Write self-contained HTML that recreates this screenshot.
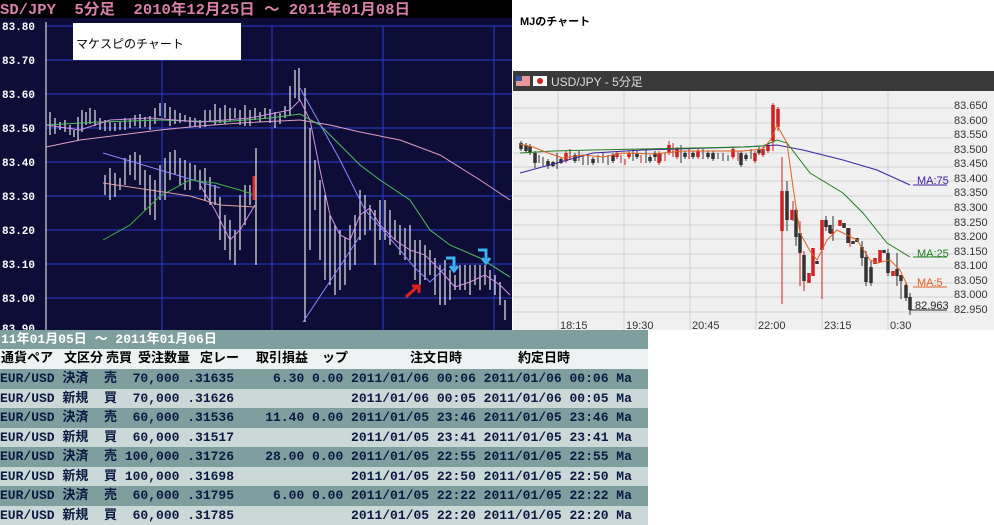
<!DOCTYPE html>
<html><head><meta charset="utf-8"><style>
body{margin:0;width:994px;height:525px;overflow:hidden;background:#fff;position:relative;font-family:"Liberation Sans","Noto Sans CJK JP",sans-serif}
.a{position:absolute}
#tbl{position:absolute;left:0;top:330px;width:648px;height:195px;background:#7f9e9e;overflow:hidden;font-family:"Liberation Mono","Noto Sans CJK JP",monospace;font-weight:bold;font-size:13px;color:#0a1a40}
.r{position:absolute;left:0;width:648px;height:19.5px;line-height:19.5px;white-space:pre}
.r span{position:absolute;top:0}
</style></head><body>
<svg class="a" style="left:0;top:0" width="512" height="330">
<rect width="512" height="330" fill="#0d0d38"/>
<rect width="512" height="18" fill="#000"/>
<text x="0" y="14" fill="#d880a8" font-size="15" font-family="Liberation Mono,Noto Sans CJK JP,monospace" font-weight="bold" style="white-space:pre" textLength="410" lengthAdjust="spacingAndGlyphs">SD/JPY  5分足  2010年12月25日 ～ 2011年01月08日</text>
<g stroke="#2a3cd0" stroke-width="1">
<path d="M46 26V330M162 26V330M272 26V330M383 26V330M494 26V330"/>
<path d="M46 26H512M46 60H512M46 94H512M46 128H512M46 162H512M46 196H512M46 230H512M46 264H512M46 298H512"/>
</g>
<path d="M46 22V330" stroke="#fff"/>
<g fill="#fff" font-size="11" font-family="Liberation Mono,monospace" font-weight="bold">
<text x="2" y="30">83.80</text><text x="2" y="64">83.70</text><text x="2" y="98">83.60</text><text x="2" y="132">83.50</text><text x="2" y="166">83.40</text><text x="2" y="200">83.30</text><text x="2" y="234">83.20</text><text x="2" y="268">83.10</text><text x="2" y="302">83.00</text><text x="2" y="332">83.90</text>
</g>
<rect x="73" y="23" width="168" height="37" fill="#fff"/>
<text x="76" y="48" font-size="12" fill="#000">マケスピのチャート</text>
<g stroke="#e8e8e8" stroke-width="1.2">
<path d="M50 112V135M55 118V134M60 122V130M65 120V132M70 125V135M74 130V137M78 117V140M82 110V132M86 112V125M90 108V124M95 110V126M100 118V130M105 120V131M110 122V131M115 123V131M120 122V130M125 118V130M130 119V128M135 115V126M140 114V128M145 117V127M150 116V130M155 108V124M160 103V116M165 103V118M170 107V126M175 110V124M180 113V123M185 115V122M190 117V127M195 118V126M200 120V128M205 110V127M210 110V122M215 104V125M220 108V123M225 105V124M230 108V121M235 108V118M240 110V125M245 105V126M250 110V126M255 108V120M260 112V122M265 108V118M270 109V123M275 112V128M280 113V124M285 106V118M290 86V116M295 70V98M299 68V100"/>
<path d="M305 88V322M310 128V250M315 160V210M320 180V260M325 195V280M330 215V285M335 225V295M340 230V290M345 237V285M350 225V270M355 215V265M360 190V240M365 195V235M370 205V230M375 210V265M380 200V240M385 200V240M390 210V245M395 220V240M400 225V255M405 228V260M410 225V260M415 240V280M420 240V285M425 245V280M430 250V275M435 258V295M440 265V305M445 260V305M450 270V300M455 275V290M460 265V290M465 265V290M470 265V295M475 265V285M480 265V290M485 265V285M490 270V290M495 275V295M500 282V305M505 300V320"/>
<path d="M105 175V195M110 168V200M115 173V197M120 178V190M125 158V185M130 155V175M135 152V180M140 155V185M145 170V210M150 175V215M155 180V220M160 165V200M165 158V200M170 152V180M175 150V175M180 158V185M185 160V190M190 163V190M195 165V180M200 170V190M205 168V200M210 177V205M215 185V205M220 197V240M225 215V250M230 220V260M235 230V265M240 195V250M245 185V225M250 185V205M256 148V265"/>
</g>
<g fill="none" stroke-width="1">
<path d="M46 147L80 140L120 135L160 130L200 126L240 123L280 121L300 120L330 125L360 132L400 140L440 155L480 180L510 200" stroke="#e0a0c0"/>
<path d="M46 125L100 122L160 120L220 122L270 118L300 114L320 125L340 145L360 165L380 180L410 200L430 230L450 245L480 258L510 277" stroke="#50c060"/>
<path d="M46 125L80 130L110 120L150 118L200 122L250 118L290 110L300 100L310 120L320 170L330 215L340 235L350 240L360 215L370 208L380 225L395 240L410 250L425 255L440 270L455 287L470 282L485 275L500 285L510 295" stroke="#d090e0"/>
<path d="M300 88L340 160L365 210L400 250L415 268L430 282L445 268" stroke="#8888ff"/>
<path d="M303 322L360 236" stroke="#8888ff"/>
<path d="M103 153L160 170L220 188" stroke="#8888ff"/>
<path d="M103 240L130 225L160 196L190 180L215 183L240 190L255 195" stroke="#40b040"/>
<path d="M103 183L150 190L190 196L220 205L255 207" stroke="#e0a0a0"/>
<path d="M200 185L215 210L230 240L240 230L255 205" stroke="#d090e0"/>
</g>
<path d="M254 176V200" stroke="#d03030" stroke-width="3"/>
<path d="M406 297L418 286M412 286H419V293" stroke="#e02020" stroke-width="3" fill="none"/>
<path d="M446 258H454V268M450 266L454 271L458 266" stroke="#40b0f0" stroke-width="3" fill="none"/>
<path d="M478 250H486V260M482 258L486 263L490 258" stroke="#40b0f0" stroke-width="3" fill="none"/>
</svg>
<div class="a" style="left:520px;top:13px;font-size:11px;font-weight:bold;color:#000">MJのチャート</div>
<svg class="a" style="left:513px;top:71px" width="481" height="259">
<rect width="481" height="20" fill="#3a3a3a"/>
<rect x="3" y="5" width="14" height="10" fill="#fff"/><path d="M3 6H17M3 8H17M3 10H17M3 12H17M3 14H17" stroke="#d03030"/><rect x="3" y="5" width="6" height="5" fill="#3050a0"/>
<rect x="20" y="5" width="14" height="10" fill="#fff"/><circle cx="27" cy="10" r="3" fill="#d02020"/>
<text x="38" y="15" fill="#ddd" font-size="12">USD/JPY - 5分足</text>
<rect y="20" width="481" height="239" fill="#f0f0f0"/>
<g stroke="#cfcfcf">
<path d="M45 20V259M111 20V259M177 20V259M243 20V259M309 20V259M375 20V259"/>
<path d="M0 37H440M0 52H440M0 67H440M0 82H440M0 96H440M0 110H440M0 125H440M0 139H440M0 154H440M0 168H440M0 183H440M0 197H440M0 212H440M0 226H440M0 241H440"/>
</g>
<g font-size="11" fill="#333">
<text x="441" y="38">83.650</text><text x="441" y="53">83.600</text><text x="441" y="67">83.550</text><text x="441" y="82">83.500</text><text x="441" y="96">83.450</text><text x="441" y="111">83.400</text><text x="441" y="125">83.350</text><text x="441" y="140">83.300</text><text x="441" y="155">83.250</text><text x="441" y="169">83.200</text><text x="441" y="184">83.150</text><text x="441" y="198">83.100</text><text x="441" y="213">83.050</text><text x="441" y="227">83.000</text><text x="441" y="242">82.950</text>
<text x="47" y="258">18:15</text><text x="113" y="258">19:30</text><text x="179" y="258">20:45</text><text x="245" y="258">22:00</text><text x="311" y="258">23:15</text><text x="377" y="258">0:30</text>
<text x="404" y="113" fill="#4020a0">MA:75</text><text x="404" y="186" fill="#208020">MA:25</text><text x="404" y="215" fill="#e06020">MA:5</text><text x="402" y="238" fill="#222">82.963</text>
</g>
<path d="M400 114H434" stroke="#4020a0"/><path d="M400 186H434" stroke="#208020"/><path d="M400 216H434" stroke="#e06020"/><path d="M397 239H434" stroke="#222"/>
<g stroke-width="1">
<path d="M8 70V80M13 72V82M17 73V84M22 80V97M26 84V92M30 86V95M35 88V98M40 90V96M44 82V98M48 86V93M57 78V88M62 82V92M66 80V90M70 84V94M75 84V94M80 86V94M85 84V92M90 82V92M95 84V94M100 82V92M120 78V90M124 80V88M133 78V92M137 84V92M142 80V90M148 82V90M168 74V92M172 80V88M180 80V88M190 78V88M195 80V88M200 80V90M205 82V88M210 82V90M215 84V90M228 80V96M233 82V90M238 78V88M246 76V84" stroke="#333"/>
<path d="M53 80V92M104 80V88M108 84V92M112 88V94M116 80V88M128 84V92M146 80V94M152 82V90M156 70V84M160 72V86M164 76V88M176 78V88M185 78V88M220 76V88M225 80V90M242 80V92M250 76V86M255 72V82M260 32V80M265 36V60" stroke="#d02020"/>
</g>
<g stroke-width="3.5">
<path d="M8 72V78M13 74V80M17 75V82M22 82V92M35 90V95M40 91V95M48 88V92M62 84V90M80 88V92M100 84V90M124 82V86M137 86V90M142 82V86M172 82V86M180 82V86M195 82V86M200 82V88M228 82V94M233 84V88M246 78V82" stroke="#333"/>
<path d="M53 82V90M104 82V86M116 82V86M146 82V92M156 74V82M164 78V86M185 80V86M220 78V86M242 82V90M250 78V84M255 74V80M260 34V70M265 38V56" stroke="#d02020"/>
</g>
<g stroke-width="1" fill="none">
<path d="M269 86V233M309 149V228M337 157V176M280 130V150M287 150V215M291 180V220" stroke="#d02020"/>
<path d="M274 110V160M283 135V175M313 145V160M320 145V170M349 170V195M353 180V215M358 190V215M375 178V205M384 182V215M388 205V228M393 212V230M397 222V244" stroke="#333"/>
</g>
<g stroke-width="3.5">
<path d="M269 120V160M279 139V149M296 202V212M300 177V205M309 149V179M318 158V163M327 149V155M362 187V193M367 179V191M380 200V205" stroke="#d02020"/>
<path d="M274 120V149M283 139V166M287 162V182M291 184V210M304 190V193M313 149V156M317 154V162M331 152V157M335 157V172M340 170V173M344 167V171M349 176V187M353 186V211M358 196V212M371 179V182M375 182V202M384 198V205M388 204V210M393 214V227M397 226V239" stroke="#333"/>
</g>
<g stroke-width="1" fill="none">
<path d="M7 102L44 92L80 82L130 79L230 76L264 74L290 79L330 89L364 99L397 114" stroke="#4020a0"/>
<path d="M7 82L40 80L80 79L130 78L180 77L230 76L250 75L264 69L274 72L297 102L330 122L350 142L374 172L397 186" stroke="#208020"/>
<path d="M7 73L20 76L35 82L50 87L70 84L90 86L110 82L140 83L170 80L200 80L230 80L250 78L258 68L264 54L274 72L280 116L287 162L297 180L304 189L314 169L324 159L344 169L357 189L364 192L377 189L387 199L395 216" stroke="#e06020"/>
</g>
</svg>
<div id="tbl">
<div class="r" style="top:0;height:19px;background:#7f9e9e;color:#fff;font-size:13px;padding-left:1px">11年01月05日 ～ 2011年01月06日</div>
<div class="r" style="top:19px;height:20px;background:#eef2f2;color:#000">
<span style="left:1px">通貨ペア</span><span style="left:64px">文区分</span><span style="left:106px">売買</span><span style="left:138px">受注数量</span><span style="left:200px">定レー</span><span style="left:256px">取引損益</span><span style="left:322px">ップ</span><span style="left:410px">注文日時</span><span style="left:518px">約定日時</span>
</div>
<div class="r" style="top:39px;background:#7f9e9e">EUR/USD 決済  売  70,000 .31635     6.30 0.00 2011/01/06 00:06 2011/01/06 00:06 Ma</div>
<div class="r" style="top:58.5px;background:#cad8d8">EUR/USD 新規  買  70,000 .31626               2011/01/06 00:05 2011/01/06 00:05 Ma</div>
<div class="r" style="top:78px;background:#7f9e9e">EUR/USD 決済  売  60,000 .31536    11.40 0.00 2011/01/05 23:46 2011/01/05 23:46 Ma</div>
<div class="r" style="top:97.5px;background:#cad8d8">EUR/USD 新規  買  60,000 .31517               2011/01/05 23:41 2011/01/05 23:41 Ma</div>
<div class="r" style="top:117px;background:#7f9e9e">EUR/USD 決済  売 100,000 .31726    28.00 0.00 2011/01/05 22:55 2011/01/05 22:55 Ma</div>
<div class="r" style="top:136.5px;background:#cad8d8">EUR/USD 新規  買 100,000 .31698               2011/01/05 22:50 2011/01/05 22:50 Ma</div>
<div class="r" style="top:156px;background:#7f9e9e">EUR/USD 決済  売  60,000 .31795     6.00 0.00 2011/01/05 22:22 2011/01/05 22:22 Ma</div>
<div class="r" style="top:175.5px;background:#cad8d8">EUR/USD 新規  買  60,000 .31785               2011/01/05 22:20 2011/01/05 22:20 Ma</div>
</div>
</body></html>
